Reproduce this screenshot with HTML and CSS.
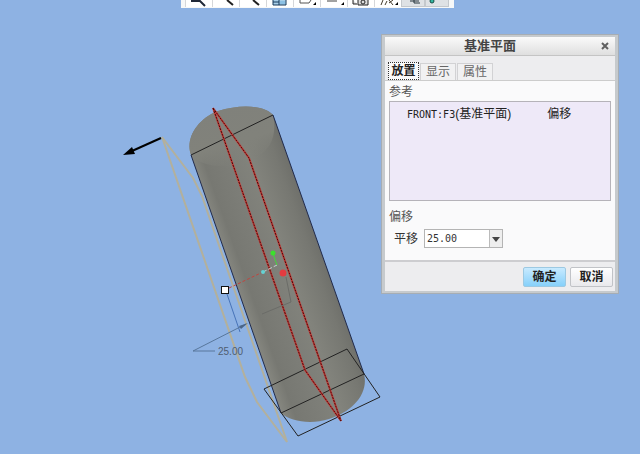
FILE: index.html
```
<!DOCTYPE html>
<html lang="zh-CN">
<head>
    <meta charset="UTF-8">
    <meta name="viewport" content="width=device-width, initial-scale=1.0">
    <title>基准平面</title>
    <link rel="stylesheet" href="styles.css">
</head>
<body>
    <main class="viewport">
        <svg class="scene" width="640" height="454" viewBox="0 0 640 454">
            <defs>
                <linearGradient id="shell" gradientUnits="userSpaceOnUse" x1="234" y1="279" x2="323" y2="247">
                    <stop offset="0" stop-color="#85867f"/>
                    <stop offset=".12" stop-color="#777872"/>
                    <stop offset=".35" stop-color="#7c7d77"/>
                    <stop offset=".6" stop-color="#82837c"/>
                    <stop offset=".85" stop-color="#777872"/>
                    <stop offset="1" stop-color="#6d6e69"/>
                </linearGradient>
                <linearGradient id="cap" gradientUnits="userSpaceOnUse" x1="225" y1="108" x2="242" y2="165">
                    <stop offset="0" stop-color="#80817b"/>
                    <stop offset=".6" stop-color="#81827b"/>
                    <stop offset="1" stop-color="#81827b" stop-opacity="0"/>
                </linearGradient>
            </defs>

            <!-- offset plane -->
            <path class="plane-offset" d="M162 137L245 377L257 402L287 442L202 196L193 178Z"/>

            <!-- cylinder -->
            <path fill="url(#shell)" d="M191 155C185 139 197 119 218 111C240 104 264 105 273 115L364 374C369 394 352 412 329 419C310 425 290 421 281 413Z"/>
            <path fill="url(#cap)" d="M191 155C185 139 197 119 218 111C240 104 264 105 273 115C277 134 272 148 256 158C234 170 204 169 191 155Z"/>
            <path class="edge" d="M191 155L273 115"/>
            <path class="edge-side" d="M191 155L281 413M273 115L364 374"/>
            <path class="edge" d="M281 413L364 374"/>
            <path class="edge" d="M264 389L347 349L380 397L298 436Z"/>

            <!-- selected plane -->
            <path class="plane-glow" d="M213 108L249 158L341 421L305 370Z"/>
            <path class="plane-red" d="M213 108L249 158L341 421L305 370Z"/>

            <!-- drag handle and coordinate axes -->
            <path d="M229 288L263 272" stroke="#c0443e" stroke-dasharray="3 2"/>
            <path d="M263 272L277 265" stroke="#c5d0ce" stroke-dasharray="4 2"/>
            <path d="M273 254L277 265" stroke="#43d83c"/>
            <path d="M286 277L291 302L262 314" fill="none" stroke="#6b6c68"/>
            <circle cx="273" cy="253" r="2.5" fill="#3ce02d"/>
            <circle cx="263" cy="272" r="2" fill="#63d3d4"/>
            <circle cx="283" cy="273" r="3.5" fill="#e33b40"/>
            <path d="M227 294L240 332" stroke="#4773b8"/>
            <rect x="221.500" y="286.500" width="7" height="7" fill="#fff" stroke="#111"/>

            <!-- dimension -->
            <path class="dimension" d="M215 351H193L246 324"/>
            <path d="M248 323L239 326L241 329Z" fill="#4b6587"/>
            <text class="dimension-text" x="218" y="355">25.00</text>

            <!-- direction arrow -->
            <path d="M161 138L132 151" stroke="#000" stroke-width="2"/>
            <path d="M123 155L132 147L135 154Z"/>
        </svg>

        <nav class="toolbar" aria-label="视图">
            <button class="tool" aria-label="重新调整"><svg width="25" height="7" viewBox="0 0 25 7"><path d="M5 1H14L19 6" stroke="#202938" stroke-width="2" fill="none"/></svg></button>
            <button class="tool" aria-label="放大"><svg width="25" height="7" viewBox="0 0 25 7"><path d="M14 0L20 5" stroke="#202020" stroke-width="2"/></svg></button>
            <button class="tool" aria-label="缩小"><svg width="25" height="7" viewBox="0 0 25 7"><path d="M13 0L19 5" stroke="#202020" stroke-width="2"/></svg></button>
            <button class="tool" aria-label="重画"><svg width="25" height="7" viewBox="0 0 25 7"><path d="M6 0V5H19V0M12 0V5M6 2H12" stroke="#17385a" fill="#a8cfe9"/><path d="M13 1H18V4H13Z" fill="#8bc0e4"/></svg></button>
            <button class="tool" aria-label="显示样式"><svg width="25" height="7" viewBox="0 0 25 7"><path d="M6 0V3H15L17 0" stroke="#555" fill="none"/><path d="M22 2V5H19Z"/></svg></button>
            <button class="tool" aria-label="已保存方向"><svg width="25" height="7" viewBox="0 0 25 7"><path d="M6 1H16" stroke="#444"/><path d="M23 2V5H20Z"/></svg></button>
            <button class="tool" aria-label="视图管理器"><svg width="25" height="7" viewBox="0 0 25 7"><path d="M5 0V4H9M10 0V5H20V0" stroke="#222" fill="#ddd"/><circle cx="15" cy="2" r="2" fill="none" stroke="#222"/></svg></button>
            <button class="tool" aria-label="基准显示过滤器"><svg width="25" height="7" viewBox="0 0 25 7"><path d="M6 5L8 0M12 1L10 5M14 0L18 5M18 0L14 3" stroke="#433b2c" fill="none"/><path d="M23 2V5H20Z"/></svg></button>
            <button class="tool tool-on" aria-label="注释显示"><svg width="22" height="7" viewBox="0 0 22 7"><path d="M8 1H17M12 0V3H18" stroke="#26343c" fill="none"/></svg></button>
            <button class="tool tool-on" aria-label="旋转中心"><svg width="22" height="7" viewBox="0 0 22 7"><circle cx="6" cy="1" r="2" fill="#32b6a0" stroke="#174c46"/></svg></button>
        </nav>

        <section class="dialog" role="dialog" aria-labelledby="dialogTitle">
            <header class="dialog-title">
                <h1 id="dialogTitle">基准平面</h1>
                <button class="close" aria-label="关闭"><svg width="8" height="8" viewBox="0 0 8 8"><path d="M1 1L7 7M7 1L1 7" stroke="#606060" stroke-width="2"/></svg></button>
            </header>

            <div class="tabs" role="tablist">
                <button class="tab tab-active" role="tab" aria-selected="true">放置</button>
                <button class="tab" role="tab" aria-selected="false">显示</button>
                <button class="tab" role="tab" aria-selected="false">属性</button>
            </div>

            <div class="dialog-body">
                <div class="group-label">参考</div>
                <div class="references">
                    <div class="reference">
                        <span><span class="mono">FRONT:F3</span>(基准平面)</span>
                        <span>偏移</span>
                    </div>
                </div>
                <div class="group-label">偏移</div>
                <div class="field">
                    <label for="translation">平移</label>
                    <div class="combo">
                        <select id="translation" class="mono">
                            <option selected>25.00</option>
                        </select>
                        <svg class="combo-arrow" width="13" height="17" viewBox="0 0 13 17"><path d="M0.500 0V17" stroke="#bbb"/><path d="M3 7H11L7 12Z" fill="#444"/></svg>
                    </div>
                </div>
            </div>

            <footer class="actions">
                <button class="action action-primary">确定</button>
                <button class="action">取消</button>
            </footer>
        </section>
    </main>
</body>
</html>
```
FILE: styles.css
```
html,
body {
    margin: 0;
    height: 100%;
}

body {
    background: #8eb2e3;
    color: #333;
    font: 12px/16px "Liberation Sans", "Noto Sans CJK SC", sans-serif;
}

* {
    box-sizing: border-box;
}

button,
select {
    margin: 0;
    padding: 0;
    border: 0;
    color: inherit;
    font: inherit;
}

.viewport {
    position: relative;
    min-height: 100%;
    overflow: hidden;
}

/* model canvas */
.scene {
    position: absolute;
    top: 0;
    left: 0;
}

.plane-offset {
    fill: none;
    stroke: #b3b09c;
    stroke-width: 2;
}

.edge,
.edge-side {
    fill: none;
    stroke: #222;
}

.edge-side {
    stroke: #202a4c;
}

.plane-glow,
.plane-red {
    fill: none;
    stroke: #c0403c;
    stroke-width: 2;
}

.plane-red {
    stroke: #4a0808;
    stroke-width: 1;
    stroke-dasharray: 2 1;
}

.dimension {
    fill: none;
    stroke: #58779c;
}

.dimension-text {
    fill: #4e5d70;
    font: 10px "Liberation Sans", sans-serif;
}

/* toolbar */
.toolbar {
    position: absolute;
    top: 0;
    left: 181px;
    display: flex;
    padding: 0 5px 1px 4px;
    background: #f7f8f8;
}

.tool {
    display: flex;
    width: 27px;
    height: 7px;
    border-left: 1px solid #d5d7da;
    background: #fff;
}

.tool-on {
    width: 24px;
    border: 1px solid #c4c8cc;
    border-top: 0;
    background: #dfe2e5;
}

/* dialog */
.dialog {
    position: absolute;
    top: 34px;
    left: 381px;
    width: 238px;
    padding: 2px 3px;
    border: 1px solid #a6adb4;
    background: #c6cacd;
}

.dialog-title {
    display: flex;
    align-items: center;
    height: 19px;
    padding-right: 5px;
    padding-left: 17px;
    border-bottom: 1px solid #c4c4c4;
    background: linear-gradient(#fafafa, #dfdfdf);
}

.dialog-title h1 {
    flex: 1;
    margin: 0;
    padding-right: 22px;
    color: #444;
    font-size: 13px;
    line-height: 16px;
    text-align: center;
}

.close {
    display: flex;
    padding: 1px;
    background: none;
}

.tabs {
    display: flex;
    align-items: flex-end;
    gap: 1px;
    height: 25px;
    padding-left: 3px;
    border-bottom: 1px solid #ccc;
    background: #ededef;
}

.tab {
    width: 36px;
    height: 17px;
    border: 1px solid #d2d2d4;
    border-bottom: 0;
    background: #f1f1f2;
    color: #666;
    line-height: 16px;
}

.tab-active {
    width: 31px;
    height: 18px;
    border: 1px dotted #333;
    background: #fafafa;
    color: #222;
    font-weight: bold;
}

.dialog-body {
    padding: 3px 4px 12px;
    background: #fafafb;
}

.group-label {
    color: #555;
}

.references {
    height: 100px;
    margin: 1px 0 8px;
    padding: 4px 17px;
    border: 1px solid #b5b3b9;
    background: #eee9f8;
}

.reference {
    display: flex;
    gap: 36px;
    color: #222;
}

.mono {
    font-family: "DejaVu Sans Mono", monospace;
    font-size: 10px;
}

.field {
    display: flex;
    align-items: center;
    gap: 6px;
    padding: 4px 0 0 5px;
}

.combo {
    display: grid;
    width: 79px;
    border: 1px solid #b4b4b4;
    background: #fff;
}

.combo select,
.combo-arrow {
    grid-area: 1 / 1;
}

.combo select {
    height: 17px;
    padding-left: 2px;
    appearance: none;
    background: #fff;
}

.combo-arrow {
    justify-self: end;
    background: #eee;
    pointer-events: none;
}

.actions {
    display: flex;
    justify-content: flex-end;
    gap: 4px;
    padding: 5px 2px 4px;
    border-top: 2px solid #cdcdd0;
    background: #ededef;
}

.action {
    width: 43px;
    height: 20px;
    border: 1px solid #c1c3c7;
    border-radius: 2px;
    background: linear-gradient(#fff, #e9e9ec);
    color: #222;
    font-weight: bold;
}

.action-primary {
    border-color: #9dc9e2;
    background: linear-gradient(#c8eaff, #86d0fa);
}
```
